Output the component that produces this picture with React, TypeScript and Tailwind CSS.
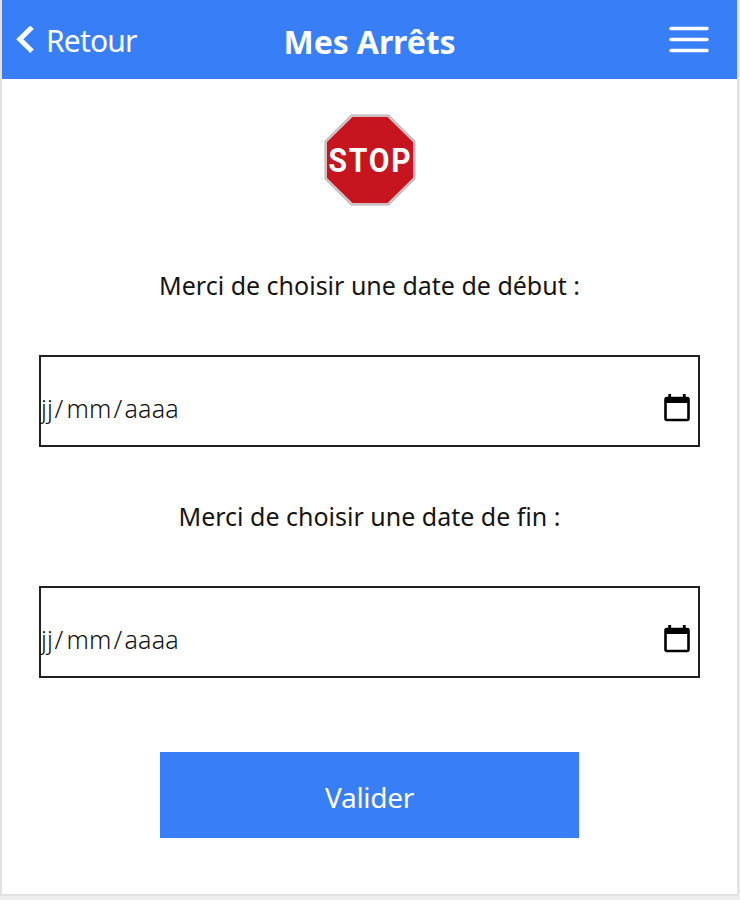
import React from "react";

export default function App() {
  return (
    <div className="h-[900px] w-[740px] overflow-hidden bg-[#eeeeee] pr-px font-['Noto_Sans','Open_Sans',sans-serif]">
      <div className="flex h-[896px] flex-col border-x-2 border-b-2 border-[#e2e2e2] bg-white">
        <Header />
        <main className="flex flex-col items-center">
          <StopSign />
          <form className="flex w-[661px] flex-col items-center">
            <DateField id="start" label="Merci de choisir une date de début :" labelClassName="mt-[59px]" />
            <DateField id="end" label="Merci de choisir une date de fin :" labelClassName="mt-[49px]" />
            <button
              type="button"
              className="mt-[74px] h-[86px] w-[419px] bg-[#387ef7] pt-1 text-[28px] tracking-[-0.3px] text-white"
            >
              Valider
            </button>
          </form>
        </main>
      </div>
    </div>
  );
}

function Header() {
  return (
    <header className="grid h-[79px] shrink-0 grid-cols-[1fr_auto_1fr] items-center bg-[#387ef7] text-white">
      <button type="button" className="flex items-center gap-3 pl-[14px]">
        <svg width="18" height="28" viewBox="0 0 18 28" fill="none" stroke="currentColor" strokeWidth="5">
          <path d="M16 1.3 3.8 13.3 16 25.3" />
        </svg>
        <span className="pt-0.5 text-[30px] leading-10 tracking-[-0.8px]">Retour</span>
      </button>
      <h1 className="pt-1 text-[32px] leading-10 font-bold tracking-[-0.1px]">Mes Arrêts</h1>
      <button type="button" aria-label="Menu" className="mr-7 justify-self-end">
        <svg width="40" height="28" viewBox="0 0 40 28" stroke="currentColor" strokeWidth="3.6" strokeLinecap="round">
          <path d="M2 2.5h36M2 13.5h36M2 24.5h36" />
        </svg>
      </button>
    </header>
  );
}

function StopSign() {
  return (
    <svg className="mt-[35px] overflow-visible" width="92" height="92" viewBox="0 0 92 92">
      <path d="M27 1h38l26 26v38L65 91H27L1 65V27z" fill="#d2c5c6" stroke="#b9b3b3" />
      <path d="M28.5 3h35L89 28v36L63.5 89h-35L3 64V28z" fill="#c71520" />
      <text
        x="4.5"
        y="58"
        textLength="84"
        lengthAdjust="spacingAndGlyphs"
        fill="#fff"
        className="font-['Roboto',sans-serif] text-[34px] font-bold tracking-[2px]"
      >
        STOP
      </text>
    </svg>
  );
}

function DateField({ id, label, labelClassName }: { id: string; label: string; labelClassName: string }) {
  return (
    <>
      <label htmlFor={id} className={`text-[25px] leading-10 whitespace-nowrap text-[#151515] ${labelClassName}`}>
        {label}
      </label>
      <div
        id={id}
        className="mt-[50px] flex h-[92px] w-full items-center justify-between border-2 border-[#202020] pt-3.5 pr-2"
      >
        <span className="text-[25px] leading-8 font-light tracking-[0.2px] whitespace-nowrap text-[#111111]">
          jj<span className="mr-[3px] ml-[1.5px]">/</span>mm<span className="mx-[2px]">/</span>aaaa
        </span>
        <CalendarIcon />
      </div>
    </>
  );
}

function CalendarIcon() {
  return (
    <svg width="26" height="28" viewBox="0 0 26 28" fill="none" stroke="#000">
      <rect x="1.5" y="4" width="23" height="22" rx="1.5" strokeWidth="2.6" />
      <path d="M1 6h24" strokeWidth="6" />
      <path d="M5.7 0v5M20.3 0v5" strokeWidth="2.8" />
    </svg>
  );
}
